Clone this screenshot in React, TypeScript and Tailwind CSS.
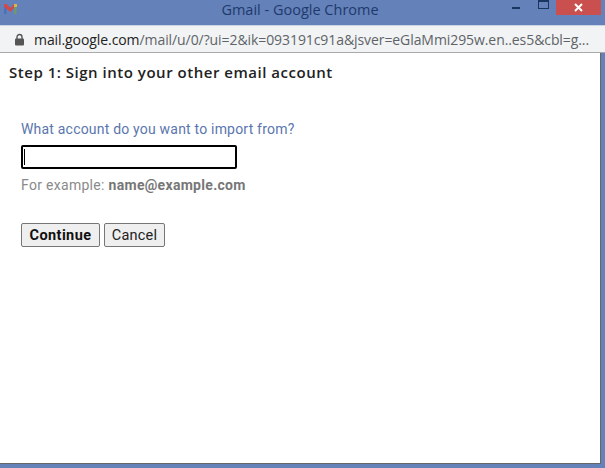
export default function App() {
  return (
    <div className="w-[605px] h-[468px] flex flex-col bg-[#6481ba] overflow-hidden font-['Roboto','Liberation_Sans',sans-serif]">
      {/* Title bar */}
      <div className="relative h-[25px] shrink-0 flex items-center justify-center pr-[5px]">
        <svg className="absolute left-[3px] top-[3px]" width="15" height="12" viewBox="0 0 15 12">
          <path d="M1 11V1h2.5v10z" fill="#4a72b8" />
          <path d="M11 11V4h2.5v7z" fill="#6f9a6a" />
          <path d="M1 1l2.5 0 4 4 3.5-4v4l-3.5 4-6.5-5z" fill="#cf4a4a" />
          <path d="M11 1h3v3h-3z" fill="#d8b64a" />
        </svg>
        <span className="text-[14.5px] text-[#1e3a6b] font-['Open_Sans',sans-serif] -mt-[6px]">Gmail - Google Chrome</span>
        <div className="absolute left-[512px] top-[7px] w-[8px] h-[2px] bg-[#1b3563]" />
        <div className="absolute left-[538px] top-0 w-[11px] h-[9px] border border-[#1b3563] border-t-2" />
        <div className="absolute left-[556px] top-0 w-[45px] h-[15px] bg-[#c9504f] flex items-center justify-center">
          <svg width="9" height="9" viewBox="0 0 9 9">
            <path d="M1 1l7 7M8 1l-7 7" stroke="#fff" strokeWidth="2" />
          </svg>
        </div>
      </div>
      {/* Address bar */}
      <div className="h-[28px] shrink-0 flex items-center bg-[#f1f3f4] border-t border-[#c9d3e4] border-b border-b-[#a9a9a9] pl-[14px]">
        <svg width="11" height="13" viewBox="0 0 11 13">
          <path d="M3 6V4a2.5 2.5 0 0 1 5 0v2" fill="none" stroke="#555" strokeWidth="1.4" />
          <rect x="1" y="5.5" width="9" height="7" rx="1" fill="#555" />
        </svg>
        <span className="ml-[9px] text-[14px] text-[#5f6368] font-['Open_Sans',sans-serif] whitespace-nowrap tracking-[-0.08px]">
          <span className="text-[#222]">mail.google.com</span>/mail/u/0/?ui=2&amp;ik=093191c91a&amp;jsver=eGlaMmi295w.en..es5&amp;cbl=g...
        </span>
      </div>
      {/* Page */}
      <div className="flex-1 mr-[4px] mb-[4px] bg-white border-r border-b border-[#666]">
        <h1 className="mt-[9px] ml-[9px] text-[15px] leading-[20px] font-semibold tracking-[0.52px] text-[#222] font-['Open_Sans',sans-serif]">
          Step 1: Sign into your other email account
        </h1>
        <div className="ml-[21px] mt-[38px]">
          <div className="text-[14px] leading-[18px] text-[#5a76ae] tracking-[0.2px]">What account do you want to import from?</div>
          <div className="mt-[7px] w-[216px] h-[24px] border-2 border-black rounded-[2px] bg-white flex items-center pl-[1px]">
            <div className="w-px h-[16px] bg-black" />
          </div>
          <div className="mt-[7px] text-[14px] leading-[18px] text-[#8a8a8a] tracking-[0.3px]">
            For example: <span className="font-bold text-[#777]">name@example.com</span>
          </div>
          <div className="mt-[29px] flex gap-[4px]">
            <button className="w-[79px] h-[24px] pt-px rounded-[2px] border border-[#767676] bg-[#efefef] text-[14.5px] font-bold tracking-[0.4px] text-[#111]">Continue</button>
            <button className="w-[61px] h-[24px] pt-px rounded-[2px] border border-[#767676] bg-[#efefef] text-[14.5px] tracking-[0.2px] text-[#222]">Cancel</button>
          </div>
        </div>
      </div>
    </div>
  );
}
